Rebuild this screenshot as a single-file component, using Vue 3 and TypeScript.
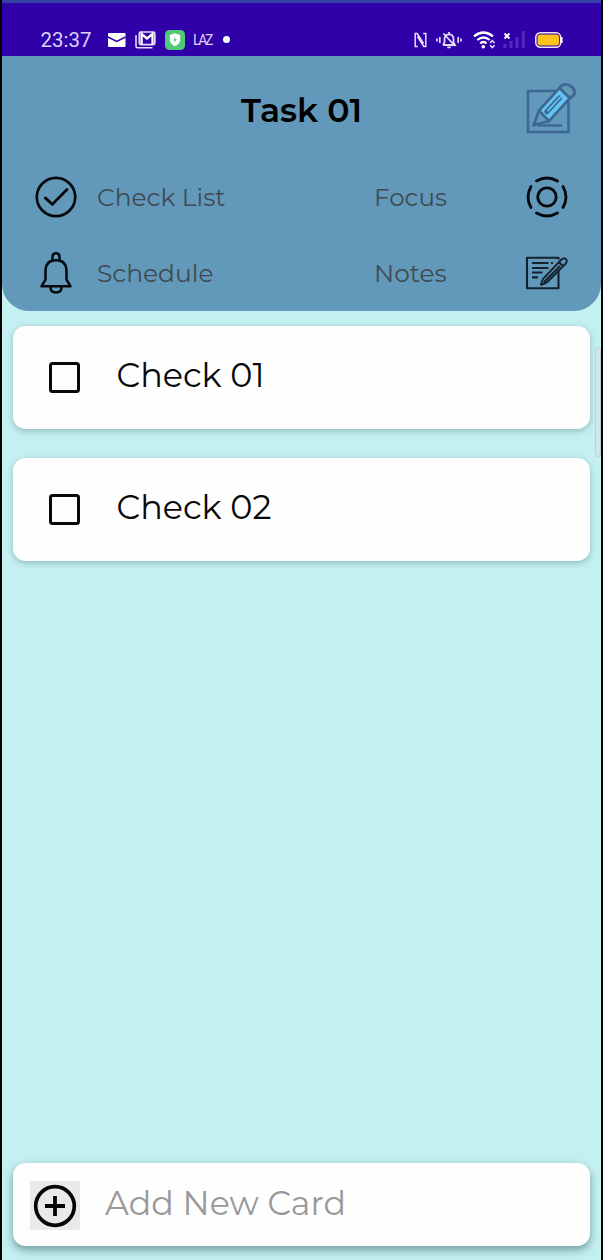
<script setup lang="ts">
interface Label {
  text: string
  width: number
}

interface CheckItem extends Label {
  id: number
  done: boolean
}

const checks: CheckItem[] = [
  { id: 1, text: 'Check 01', width: 148, done: false },
  { id: 2, text: 'Check 02', width: 155, done: false },
]

const menu: Record<'list' | 'focus' | 'schedule' | 'notes', Label> = {
  list: { text: 'Check List', width: 128.5 },
  focus: { text: 'Focus', width: 73 },
  schedule: { text: 'Schedule', width: 116.5 },
  notes: { text: 'Notes', width: 72.5 },
}
</script>

<template>
  <div class="screen">
    <div class="phone">
      <header class="status">
        <svg class="time" width="52" height="20"><text x="0.5" y="16" textLength="51" lengthAdjust="spacingAndGlyphs">23:37</text></svg>
        <svg class="mail" width="18" height="14" viewBox="0 0 18 14">
          <rect width="17.5" height="14" rx="1" fill="#fff" />
          <path d="M0 4 8.8 8.4 17.5 4" fill="none" stroke="#3000a8" stroke-width="1.5" />
        </svg>
        <svg class="gmail" width="21" height="18" viewBox="0 0 21 18">
          <path d="M1 4.2V15.2Q1 16.8 2.6 16.8H17.5" fill="none" stroke="#e4daf7" stroke-width="1.6" />
          <rect x="4.300" y="1" width="15.500" height="12.600" rx="1.500" fill="none" stroke="#e4daf7" stroke-width="1.700" />
          <path d="M6.600 13V3L12 7.500 17.500 3V13" fill="none" stroke="#fff" stroke-width="2.300" />
        </svg>
        <svg class="guard" width="20" height="20" viewBox="0 0 20 20">
          <rect width="20" height="20" rx="4.500" fill="#4fc878" />
          <path d="M10 3.300 15.200 5V10.500Q14.500 14.400 10 16.200 5.500 14.400 4.800 10.500V5Z" fill="#fff" />
          <path d="M10.500 7 8.200 10.200H9.700L9.300 12.800 11.800 9.300H10.300Z" fill="#4fc878" />
        </svg>
        <svg class="laz" width="21" height="14"><text x="0" y="12" textLength="20.500" lengthAdjust="spacing">LAZ</text></svg>
        <span class="dot"></span>
        <svg class="nfc" width="13" height="16" viewBox="0 0 13 16">
          <path d="M3.800 14.500H1.200V1.500H3.200L9.500 11.500M9.200 1.500H11.800V14.500H9.800L3.500 4.500" fill="none" stroke="#e9e0fa" stroke-width="1.500" />
        </svg>
        <svg class="mute" width="26" height="18" viewBox="0 0 26 18">
          <path d="M13 1V3M7 14H19L17.500 11.500V7.500Q17 3.300 13 3.300 9 3.300 8.500 7.500V11.500L7 14M11.300 16.300H14.700M7.500 2.500 19 15" fill="none" stroke="#e2d8f7" stroke-width="1.800" />
          <path d="M1 7.500V10.500M3.800 6V12M22.200 6V12M25 7.500V10.500" stroke="#e2d8f7" stroke-width="1.700" />
        </svg>
        <svg class="wifi" width="23" height="18" viewBox="0 0 23 18">
          <path d="M1 5.300Q10.500-2.300 20 5.300M4.300 9Q10.500 4 16.700 9M7.200 12.300Q10.500 9.700 13.600 12.300" fill="none" stroke="#fff" stroke-width="2.200" />
          <circle cx="10.300" cy="15.800" r="1.800" fill="#fff" />
          <path d="M17 12 19.300 9.700 21.600 12M17 14.300 19.300 16.600 21.600 14.300" fill="none" stroke="#e2d8f7" stroke-width="1.600" />
        </svg>
        <svg class="signal" width="22" height="17" viewBox="0 0 22 17">
          <path d="M1.500 2.500 6.500 7.500M6.500 2.500 1.500 7.500" stroke="#fff" stroke-width="1.900" />
          <path d="M1.800 13V17M8 10V17M14 6V17M20.200 0V17" stroke="#5428bb" stroke-width="3" />
        </svg>
        <svg class="battery" width="28" height="16" viewBox="0 0 28 16">
          <rect x=".8" y=".8" width="24.800" height="14.400" rx="4.500" fill="none" stroke="#eee4f5" stroke-width="1.500" />
          <rect x="2.500" y="2.600" width="21.500" height="10.900" rx="3" fill="#ffc21c" />
          <path d="M26.600 5V11" stroke="#fff" stroke-width="2" />
        </svg>
      </header>

      <section class="panel">
        <div class="title-row">
          <svg class="title" width="122" height="36"><text x="0" y="27" textLength="121" lengthAdjust="spacingAndGlyphs">Task 01</text></svg>
          <svg class="edit" width="52" height="52" viewBox="0 0 52 52">
            <rect x="4" y="9" width="40.500" height="41" fill="none" stroke="#3d6892" stroke-width="2.600" />
            <path d="M14 43.500H38" stroke="#3d6892" stroke-width="2.400" />
            <path d="M15 28.500 35.500 6 46 16 25 39Z" fill="#63c5f2" stroke="#3d6892" stroke-width="2.600" />
            <path d="M15 28.500 9.500 43.500 25 39" fill="none" stroke="#3d6892" stroke-width="2.600" stroke-linejoin="round" />
            <path d="M10.500 38.500 14.500 42 9.500 43.500Z" fill="#3d6892" />
            <path d="M35.500 6C38.500 1 44.500 1.500 48.500 5.500 52 9.500 51 14 46 16Z" fill="#6299bb" stroke="#3d6892" stroke-width="2.800" />
            <path d="M35.500 16 22.800 29.700" stroke="#3d6892" stroke-width="5" stroke-linecap="round" />
            <path d="M36.500 15 23.800 28.600" stroke="#63c5f2" stroke-width="1.700" stroke-linecap="round" />
          </svg>
        </div>

        <nav class="menu">
          <svg class="icon" width="42" height="42" viewBox="0 0 42 42">
            <circle cx="21" cy="21" r="19.200" fill="none" stroke="#05090c" stroke-width="2.700" />
            <path d="M10.300 21.900 17.300 28.400 32 13.400" fill="none" stroke="#05090c" stroke-width="2.800" stroke-linecap="round" />
          </svg>
          <svg class="label" :width="menu.list.width" height="32"><text x="0" y="25" :textLength="menu.list.width" lengthAdjust="spacingAndGlyphs">{{ menu.list.text }}</text></svg>
          <svg class="label" :width="menu.focus.width" height="32"><text x="0" y="25" :textLength="menu.focus.width" lengthAdjust="spacingAndGlyphs">{{ menu.focus.text }}</text></svg>
          <svg class="icon" width="42" height="42" viewBox="0 0 42 42">
            <circle cx="21" cy="21" r="9.200" fill="none" stroke="#05090c" stroke-width="2.800" />
            <path d="M10.500 5Q21-1 31.500 5M10.500 37Q21 43 31.500 37M5 10.500Q-1 21 5 31.500M37 10.500Q43 21 37 31.500" fill="none" stroke="#05090c" stroke-width="2.800" stroke-linecap="round" />
          </svg>

          <svg class="icon" width="42" height="42" viewBox="0 0 42 42">
            <path d="M17.500 8.500V4.700Q17.500 1.200 21 1.200 24.500 1.200 24.500 4.700V8.500M6.500 34.300H35.500L31.500 27.500V18.500Q31 8.200 21 8.200 11 8.200 10.500 18.500V27.500ZM15.500 35.500Q15.500 40.500 21 40.500 26.500 40.500 26.500 35.500" fill="none" stroke="#05090c" stroke-width="2.500" stroke-linejoin="round" />
          </svg>
          <svg class="label" :width="menu.schedule.width" height="32"><text x="0" y="25" :textLength="menu.schedule.width" lengthAdjust="spacingAndGlyphs">{{ menu.schedule.text }}</text></svg>
          <svg class="label" :width="menu.notes.width" height="32"><text x="0" y="25" :textLength="menu.notes.width" lengthAdjust="spacingAndGlyphs">{{ menu.notes.text }}</text></svg>
          <svg class="icon" width="42" height="42" viewBox="0 0 42 42">
            <path d="M32.500 7.500V5.700H1V36.300H32.500V18" fill="none" stroke="#13222c" stroke-width="2.100" stroke-linejoin="round" />
            <path d="M6 11H22.500M25 11H27M6 16H22.500M6 20.500H16.500M6 25.300H12" stroke="#13222c" stroke-width="2.200" />
            <path d="M35.500 7.500 17.500 26.300Q15.500 29 15 32.800 19 32 21.300 30L39.800 11.500Q42 8 39.300 6.600 37.500 5.600 35.500 7.500ZM33 10.300 37.200 14.200M17.500 30.500 34 13.800" fill="#6299bb" stroke="#13222c" stroke-width="1.900" stroke-linejoin="round" />
          </svg>
        </nav>
      </section>

      <main class="cards">
        <label v-for="item in checks" :key="item.id" class="card">
          <span class="box"></span>
          <svg class="big" :width="item.width" height="36"><text x="0.5" y="28.5" :textLength="item.width" lengthAdjust="spacingAndGlyphs">{{ item.text }}</text></svg>
        </label>
      </main>

      <footer class="card add">
        <span class="plus">
          <svg width="44" height="44" viewBox="0 0 44 44">
            <circle cx="22" cy="22" r="19.300" fill="none" stroke="#050505" stroke-width="3.700" />
            <path d="M22 12V32M12 22H32" stroke="#050505" stroke-width="3.800" />
          </svg>
        </span>
        <svg class="big hint" width="241" height="36"><text x="0" y="28" textLength="241" lengthAdjust="spacingAndGlyphs">Add New Card</text></svg>
      </footer>

      <div class="scrollbar"></div>
    </div>
  </div>
</template>

<style>
body {
  margin: 0;
  background: #000;
}
</style>

<style scoped>
.screen {
  box-sizing: border-box;
  width: 603px;
  height: 1260px;
  padding: 0 2px;
  background: #000;
  font-family: Montserrat, Inter, "Open Sans", sans-serif;
}
.phone {
  position: relative;
  box-sizing: border-box;
  display: flex;
  flex-direction: column;
  height: 1260px;
  padding-bottom: 14px;
  background: #c5f0f1;
}
svg {
  display: block;
  flex: none;
  overflow: visible;
}
.status {
  box-sizing: border-box;
  display: flex;
  align-items: center;
  height: 56px;
  padding: 20px 38px 0 38px;
  border-top: 3px solid #3441a5;
  background: #3000a8;
}
.time {
  margin-top: 2px;
  font: 400 20px Roboto, sans-serif;
  fill: #ded2f6;
}
.mail { margin-left: 16px; }
.gmail { margin-left: 9px; }
.guard { margin-left: 9px; }
.laz {
  margin-left: 8px;
  font: 400 14px Roboto, sans-serif;
  fill: #ded2f6;
}
.dot {
  width: 7px;
  height: 7px;
  margin-left: 9px;
  border-radius: 50%;
  background: #fff;
}
.nfc { margin-left: auto; }
.mute { margin-left: 9px; }
.wifi { margin-left: 11px; }
.signal { margin-left: 7px; }
.battery { margin-left: 10px; }
.panel {
  box-sizing: border-box;
  height: 255px;
  padding: 25px 25px 0 33px;
  border-radius: 0 0 27px 27px;
  background: #6299bb;
}
.title-row {
  display: grid;
  grid-template-columns: 1fr 52px;
  align-items: center;
  height: 52px;
}
.title {
  margin-left: 206px;
  margin-top: 10px;
  font-size: 34px;
  font-weight: 600;
  fill: #000;
}
.edit { margin-top: 1px; }
.menu {
  display: grid;
  grid-template-columns: 62px 1fr 152px 42px;
  grid-template-rows: 42px 42px;
  row-gap: 34px;
  align-items: center;
  padding: 43px 8px 0 0;
}
.label {
  margin-top: -1px;
  font-size: 25px;
  font-weight: 400;
  fill: #414a51;
}
.cards {
  display: flex;
  flex-direction: column;
  gap: 29px;
  padding-top: 15px;
}
.card {
  box-sizing: border-box;
  display: flex;
  align-items: center;
  height: 103px;
  margin: 0 11px;
  border-radius: 12.500px;
  background: #fefefe;
  box-shadow: 0 2px 6px rgba(40, 90, 95, 0.35);
}
.box {
  box-sizing: border-box;
  width: 31px;
  height: 31px;
  margin-left: 36px;
  border: 3px solid #080808;
  border-radius: 3.500px;
}
.big {
  margin-left: 36px;
  margin-top: -4px;
  font-size: 33.500px;
  font-weight: 400;
  fill: #080808;
}
.add {
  height: 83px;
  margin-top: auto;
  box-shadow: 0 4px 8px rgba(30, 75, 80, 0.5);
}
.plus {
  display: flex;
  align-items: center;
  justify-content: center;
  width: 50px;
  height: 49px;
  margin-left: 17px;
  margin-top: 2px;
  background: #e9e9e9;
}
.hint {
  margin-top: 0;
  margin-left: 25px;
  fill: #999;
}
.scrollbar {
  position: absolute;
  top: 347px;
  right: 0;
  box-sizing: border-box;
  width: 6px;
  height: 110px;
  border: 1px solid #b9d3d7;
  border-radius: 3px;
  background: #d5e4e8;
}
</style>
